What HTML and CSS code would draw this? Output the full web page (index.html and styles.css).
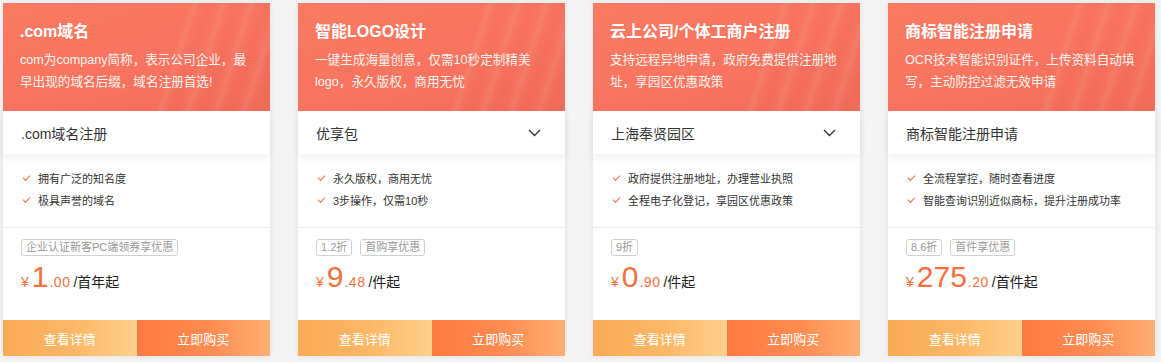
FILE: index.html
```html
<!DOCTYPE html>
<html lang="zh-CN">
<head>
  <meta charset="UTF-8">
  <title>企业服务</title>
  <link rel="stylesheet" href="styles.css">
</head>
<body>
  <div class="cards">

    <div class="card">
      <div class="card-head">
        <div class="card-title">.com域名</div>
        <div class="card-desc">com为company简称，表示公司企业，最早出现的域名后缀，域名注册首选!</div>
      </div>
      <div class="card-select">.com域名注册</div>
      <ul class="features">
        <li>拥有广泛的知名度</li>
        <li>极具声誉的域名</li>
      </ul>
      <div class="price-box">
        <div class="tags"><span class="tag">企业认证新客PC端领券享优惠</span></div>
        <div class="price"><span class="yen">¥</span><span class="num">1</span><span class="dec">.00</span><span class="unit">/首年起</span></div>
      </div>
      <div class="actions">
        <a class="btn btn-detail">查看详情</a>
        <a class="btn btn-buy">立即购买</a>
      </div>
    </div>

    <div class="card">
      <div class="card-head">
        <div class="card-title">智能LOGO设计</div>
        <div class="card-desc">一键生成海量创意，仅需10秒定制精美logo，永久版权，商用无忧</div>
      </div>
      <div class="card-select has-arrow">优享包
        <svg class="arrow" width="13" height="8" viewBox="0 0 13 8"><path d="M1 1l5.5 5.5L12 1" fill="none" stroke="#333" stroke-width="1.3"/></svg>
      </div>
      <ul class="features">
        <li>永久版权，商用无忧</li>
        <li>3步操作，仅需10秒</li>
      </ul>
      <div class="price-box">
        <div class="tags"><span class="tag">1.2折</span><span class="tag">首购享优惠</span></div>
        <div class="price"><span class="yen">¥</span><span class="num">9</span><span class="dec">.48</span><span class="unit">/件起</span></div>
      </div>
      <div class="actions">
        <a class="btn btn-detail">查看详情</a>
        <a class="btn btn-buy">立即购买</a>
      </div>
    </div>

    <div class="card">
      <div class="card-head">
        <div class="card-title">云上公司/个体工商户注册</div>
        <div class="card-desc">支持远程异地申请，政府免费提供注册地址，享园区优惠政策</div>
      </div>
      <div class="card-select has-arrow">上海奉贤园区
        <svg class="arrow" width="13" height="8" viewBox="0 0 13 8"><path d="M1 1l5.5 5.5L12 1" fill="none" stroke="#333" stroke-width="1.3"/></svg>
      </div>
      <ul class="features">
        <li>政府提供注册地址，办理营业执照</li>
        <li>全程电子化登记，享园区优惠政策</li>
      </ul>
      <div class="price-box">
        <div class="tags"><span class="tag">9折</span></div>
        <div class="price"><span class="yen">¥</span><span class="num">0</span><span class="dec">.90</span><span class="unit">/件起</span></div>
      </div>
      <div class="actions">
        <a class="btn btn-detail">查看详情</a>
        <a class="btn btn-buy">立即购买</a>
      </div>
    </div>

    <div class="card">
      <div class="card-head">
        <div class="card-title">商标智能注册申请</div>
        <div class="card-desc">OCR技术智能识别证件，上传资料自动填写，主动防控过滤无效申请</div>
      </div>
      <div class="card-select">商标智能注册申请</div>
      <ul class="features">
        <li>全流程掌控，随时查看进度</li>
        <li>智能查询识别近似商标，提升注册成功率</li>
      </ul>
      <div class="price-box">
        <div class="tags"><span class="tag">8.6折</span><span class="tag">首件享优惠</span></div>
        <div class="price"><span class="yen">¥</span><span class="num">275</span><span class="dec">.20</span><span class="unit">/首件起</span></div>
      </div>
      <div class="actions">
        <a class="btn btn-detail">查看详情</a>
        <a class="btn btn-buy">立即购买</a>
      </div>
    </div>

  </div>
</body>
</html>
```

FILE: styles.css
```css
body {
  margin: 0;
  background: #f4f4f5;
  font-family: "Liberation Sans", "Noto Sans CJK SC", sans-serif;
  color: #333;
}

.cards {
  display: flex;
  gap: 28px;
  padding: 3px 3px 5px 3px;
}

.card {
  width: 267px;
  flex: none;
  background: #fff;
  box-shadow: 0 0 6px rgba(0, 0, 0, 0.08);
  display: flex;
  flex-direction: column;
}

.card-head {
  position: relative;
  overflow: hidden;
  height: 108px;
  box-sizing: border-box;
  padding: 19px 17px 0 17px;
  color: #fff;
  background: linear-gradient(160deg, #fa7a62 0%, #f87460 55%, #f06c5a 100%);
}

/* light streaks on the right of the header */
.card-head::before {
  content: "";
  position: absolute;
  top: -20px;
  right: -30px;
  width: 130px;
  height: 160px;
  transform: skewX(-18deg);
  background: repeating-linear-gradient(90deg,
    rgba(255, 255, 255, 0) 0px,
    rgba(255, 255, 255, 0.07) 6px,
    rgba(255, 255, 255, 0) 12px,
    rgba(200, 60, 50, 0.06) 20px,
    rgba(255, 255, 255, 0) 28px);
}

.card-title {
  position: relative;
  font-size: 16px;
  font-weight: bold;
  line-height: 20px;
}

.card-desc {
  position: relative;
  margin-top: 7px;
  font-size: 12.6px;
  line-height: 22px;
  color: #fff3ee;
}

.card-select {
  position: relative;
  height: 43px;
  display: flex;
  align-items: center;
  justify-content: space-between;
  padding: 0 18px;
  font-size: 14px;
  color: #333;
  box-shadow: 0 4px 8px rgba(0, 0, 0, 0.06);
}

.card-select .arrow {
  margin-right: 6px;
}

.features {
  list-style: none;
  margin: 0;
  height: 74px;
  box-sizing: border-box;
  padding: 14px 18px 0 18px;
  border-bottom: 1px solid #ececec;
}

.features li {
  position: relative;
  padding-left: 17px;
  font-size: 11px;
  line-height: 22px;
  color: #333;
  white-space: nowrap;
}

.features li::before {
  content: "";
  position: absolute;
  left: 2px;
  top: 7px;
  width: 6px;
  height: 3px;
  border-left: 1.5px solid #f26b4a;
  border-bottom: 1.5px solid #f26b4a;
  transform: rotate(-45deg);
}

.price-box {
  height: 92px;
  box-sizing: border-box;
  padding: 11px 18px 0 18px;
}

.tags {
  display: flex;
  gap: 8px;
}

.tag {
  display: inline-block;
  height: 15px;
  line-height: 15px;
  padding: 0 4px;
  border: 1px solid #cfcfcf;
  border-radius: 3px;
  font-size: 11px;
  color: #999;
}

.price {
  margin-top: 5px;
  height: 32px;
  display: flex;
  align-items: baseline;
  color: #f5703a;
}

.yen {
  font-size: 14px;
  margin-right: 3px;
}

.num {
  font-size: 30px;
  line-height: 32px;
}

.dec {
  font-size: 14px;
  margin-left: 1px;
  letter-spacing: 0.5px;
}

.unit {
  margin-left: 3px;
  font-size: 14px;
  color: #222;
}

.actions {
  display: flex;
  height: 36px;
}

.btn {
  flex: 1;
  display: flex;
  align-items: center;
  justify-content: center;
  font-size: 13px;
  color: #fff;
  cursor: pointer;
}

.btn-detail {
  background: linear-gradient(90deg, #fbaa55 0%, #fcb867 55%, #fdd08c 100%);
}

.btn-buy {
  background: linear-gradient(90deg, #ff7a42 0%, #ff8c52 55%, #ffae72 100%);
}
```
